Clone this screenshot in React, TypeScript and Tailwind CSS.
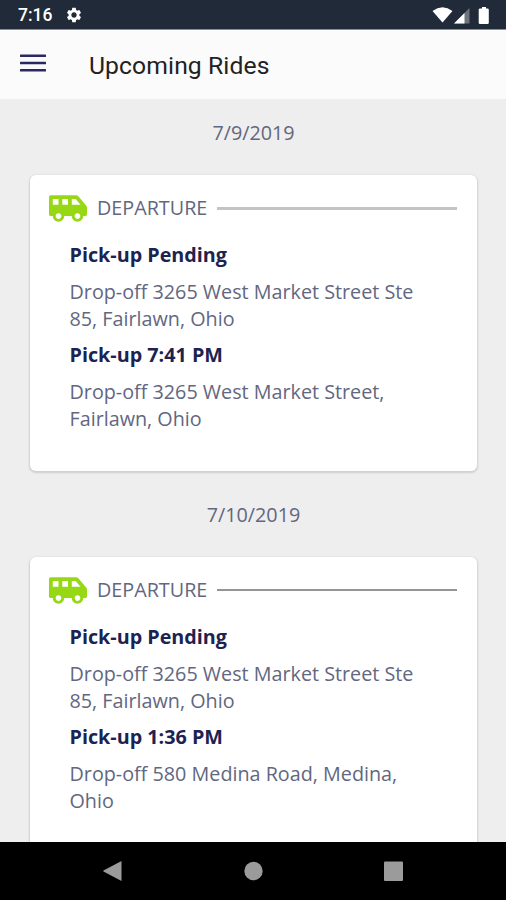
import React from 'react';
import { FaShuttleVan } from 'react-icons/fa';
import { MdSettings } from 'react-icons/md';

interface Stop {
  pickup: string;
  dropoff: string[];
}

interface Ride {
  date: string;
  lineClass: string;
  stops: Stop[];
}

const rides: Ride[] = [
  {
    date: '7/9/2019',
    lineClass: 'h-[3px] bg-[#c4c4c4]',
    stops: [
      { pickup: 'Pick-up Pending', dropoff: ['Drop-off 3265 West Market Street Ste', '85, Fairlawn, Ohio'] },
      { pickup: 'Pick-up 7:41 PM', dropoff: ['Drop-off 3265 West Market Street,', 'Fairlawn, Ohio'] },
    ],
  },
  {
    date: '7/10/2019',
    lineClass: 'h-[2px] bg-[#959595]',
    stops: [
      { pickup: 'Pick-up Pending', dropoff: ['Drop-off 3265 West Market Street Ste', '85, Fairlawn, Ohio'] },
      { pickup: 'Pick-up 1:36 PM', dropoff: ['Drop-off 580 Medina Road, Medina,', 'Ohio'] },
    ],
  },
];

const StatusBar: React.FC = () => (
  <div className="flex h-[29px] shrink-0 items-center bg-[#212a38] pl-[18px] pr-[16px] pt-[2px] text-white">
    <span className="w-[47px] font-['Roboto',sans-serif] text-[17.5px] font-medium leading-none">7:16</span>
    <MdSettings className="-mt-px size-[18px]" />
    <svg className="ml-auto h-[18px] w-[58px]" viewBox="0 0 58 18" fill="#fff">
      <path d="M0.500 4Q10.500 -3.300 20.500 4L10.500 15.500Z" />
      <path d="M37.500 1V16.500H22Z" fillOpacity=".35" />
      <path d="M32.500 6V16.500H22Z" />
      <path d="M50 0h4V1.500h1.500a1.300 1.300 0 0 1 1.300 1.300v12.900a1.300 1.300 0 0 1-1.300 1.300h-7.500a1.300 1.300 0 0 1-1.300-1.300V2.800A1.300 1.300 0 0 1 48 1.500H50z" />
    </svg>
  </div>
);

const RideCard: React.FC<{ ride: Ride }> = ({ ride }) => (
  <section className="shrink-0">
    <div className="flex h-[76px] items-center justify-center pb-[9px] pl-px text-[19.75px] text-[#62677f]">
      {ride.date}
    </div>
    <div className="mx-[30px] mb-[10px] h-[296px] w-[447px] rounded-[6px] bg-white px-5 pt-[17px] shadow-[0_1px_2px_1px_rgba(0,0,0,0.13)]">
      <div className="flex h-8 items-center">
        <FaShuttleVan className="-ml-px h-[31px] w-[38px] text-[#97d814]" />
        <span className="ml-[10px] w-[120px] text-[19.75px] text-[#62677f]">DEPARTURE</span>
        <div className={`${ride.lineClass} flex-1`} />
      </div>
      <div className="pl-[19.500px] pt-[18px] text-[19.75px]">
        {ride.stops.map((stop) => (
          <div key={stop.pickup} className="mb-[10px]">
            <div className="mb-[11px] h-[26px] font-bold leading-[26px] text-[#1d2350]">{stop.pickup}</div>
            <div className="whitespace-nowrap leading-[26.500px] text-[#62677f]">
              {stop.dropoff.map((line) => (
                <div key={line}>{line}</div>
              ))}
            </div>
          </div>
        ))}
      </div>
    </div>
  </section>
);

const NavBar: React.FC = () => (
  <div className="h-[58px] shrink-0 bg-black">
    <svg className="h-[58px] w-[506px]" viewBox="0 0 506 58" fill="#9b9b9b">
      <path d="M121.500 19v20L103.500 29.500Q102.700 29 103.500 28.500Z" />
      <circle cx="253.500" cy="29" r="9.200" />
      <rect x="384" y="19.500" width="19" height="19.500" rx="1" />
    </svg>
  </div>
);

const App: React.FC = () => (
  <div className="flex h-[900px] w-[506px] flex-col overflow-hidden bg-[#eeeeee] font-['Open_Sans',sans-serif]">
    <StatusBar />
    <header className="flex h-[70px] shrink-0 items-center border-t border-[#8a8f96] bg-[#fbfbfb] pl-5">
      <svg className="-mt-[3px] mr-[43px] h-[18px] w-[26px]" viewBox="0 0 26 18" fill="#2b2a60">
        <rect y="0.600" width="26" height="2.400" rx=".5" />
        <rect y="7.800" width="26" height="2.400" rx=".5" />
        <rect y="15" width="26" height="2.400" rx=".5" />
      </svg>
      <h1 className="pt-[3px] font-['Roboto',sans-serif] text-[24.7px] font-[450] tracking-[0.1px] text-[#222]">Upcoming Rides</h1>
    </header>
    <main className="flex min-h-0 flex-1 flex-col overflow-hidden">
      {rides.map((ride) => (
        <RideCard key={ride.date} ride={ride} />
      ))}
    </main>
    <NavBar />
  </div>
);

export default App;
